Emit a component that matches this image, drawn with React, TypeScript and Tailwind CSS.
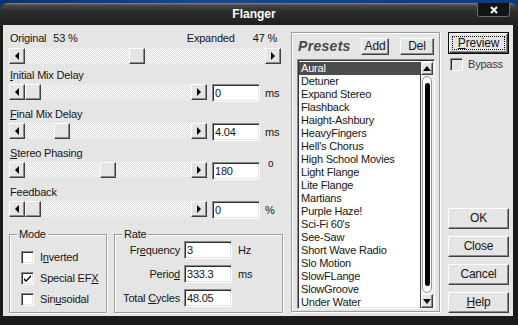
import type { ReactNode } from 'react'

// classic 3D edges
const raised =
  'border border-t-white border-l-white border-r-[#404040] border-b-[#404040] shadow-[inset_-1px_-1px_0_#8a8a8a] bg-[#e5e5e5]'
const sunken =
  'border border-t-[#8a8a8a] border-l-[#8a8a8a] border-r-white border-b-white shadow-[inset_1px_1px_0_#303030,inset_-1px_-1px_0_#e5e5e5]'
const etched = 'border border-[#9c9c9c] shadow-[1px_1px_0_#ffffff,inset_1px_1px_0_#ffffff]'

const presets = [
  'Aural',
  'Detuner',
  'Expand Stereo',
  'Flashback',
  'Haight-Ashbury',
  'HeavyFingers',
  "Hell's Chorus",
  'High School Movies',
  'Light Flange',
  'Lite Flange',
  'Martians',
  'Purple Haze!',
  "Sci-Fi 60's",
  'See-Saw',
  'Short Wave Radio',
  'Slo Motion',
  'SlowFLange',
  'SlowGroove',
  'Under Water',
]

function U({ children }: { children: ReactNode }) {
  return <span className="underline underline-offset-[1px]">{children}</span>
}

function ArrowButton({ dir }: { dir: 'left' | 'right' }) {
  return (
    <div className={`${raised} flex h-[16px] w-[16px] shrink-0 items-center justify-center`}>
      {dir === 'left' ? (
        <div className="h-0 w-0 border-y-[4px] border-r-[4px] border-y-transparent border-r-black" />
      ) : (
        <div className="h-0 w-0 border-y-[4px] border-l-[4px] border-y-transparent border-l-black" />
      )}
    </div>
  )
}

function Slider({ className, pos }: { className: string; pos: number }) {
  return (
    <div className={`flex h-[16px] shrink-0 ${className}`}>
      <ArrowButton dir="left" />
      <div className="flex flex-1 bg-[repeating-conic-gradient(#ffffff_0_25%,#dadada_0_50%)] [background-size:2px_2px]">
        <div className={`${raised} h-[16px] w-[16px]`} style={{ marginLeft: pos }} />
      </div>
      <ArrowButton dir="right" />
    </div>
  )
}

function Field({ value, className = '' }: { value: string; className?: string }) {
  return (
    <div className={`${sunken} flex h-[18px] w-[48px] shrink-0 items-center bg-white pl-[2px] ${className}`}>
      {value}
    </div>
  )
}

function SliderRow({
  label,
  pos,
  value,
  unit,
  first,
}: {
  label: ReactNode
  pos: number
  value: string
  unit: ReactNode
  first?: boolean
}) {
  return (
    <>
      <div className={`${first ? 'mt-[5px]' : 'mt-[6px]'} ml-[1px] h-[13px]`}>{label}</div>
      <div className="mt-[2px] flex h-[18px]">
        <Slider className="w-[198px]" pos={pos} />
        <Field className="ml-[5px]" value={value} />
        {unit}
      </div>
    </>
  )
}

function CheckBox({ checked, disabled }: { checked?: boolean; disabled?: boolean }) {
  return (
    <div
      className={`${sunken} flex h-[13px] w-[13px] shrink-0 items-center justify-center ${
        disabled ? 'bg-[#e5e5e5]' : 'bg-white'
      }`}
    >
      {checked && (
        <svg width="7" height="7" viewBox="0 0 7 7">
          <path d="M0 3 L0 5 L2 7 L7 2 L7 0 L2 5 Z" fill="#000" />
        </svg>
      )}
    </div>
  )
}

function Button({ children, className = 'h-[21px] w-[61px]' }: { children: ReactNode; className?: string }) {
  return (
    <div className={`${raised} flex shrink-0 items-center justify-center text-[12px] ${className}`}>
      {children}
    </div>
  )
}

function Scrollbar() {
  return (
    <div className="flex w-[13px] shrink-0 flex-col border-l border-[#404040] bg-[#f4f4f4]">
      <div className={`${raised} flex h-[13px] items-center justify-center`}>
        <div className="h-0 w-0 border-x-[4px] border-b-[5px] border-x-transparent border-b-black" />
      </div>
      <div className="mx-[1px] mt-[1px] flex flex-1 flex-col items-center rounded-full border border-[#9a9a9a] bg-[#fafafa] py-[6px]">
        <div className="w-[5px] flex-1 rounded-full bg-black" />
      </div>
      <div className={`${raised} mt-[1px] flex h-[14px] items-center justify-center`}>
        <div className="h-0 w-0 border-x-[4px] border-t-[5px] border-x-transparent border-t-black" />
      </div>
    </div>
  )
}

export default function App() {
  return (
    <div className="h-[325px] w-[518px] overflow-hidden bg-[linear-gradient(90deg,#0b336f,#14489a_40%,#0d3a7c)] font-['Liberation_Sans',Arial,sans-serif] text-[11px] leading-[13px] tracking-[-0.2px] text-[#151515]">
      <div className="mt-[3px] flex h-[322px] flex-col rounded-t-[8px] bg-[#1b1b1b]">
        {/* title bar */}
        <div className="relative flex h-[22px] shrink-0 items-center justify-center rounded-t-[8px] bg-[linear-gradient(#8a8a8a_0,#4a4a4a_2px,#2e2e2e_8px,#1e1e1e_100%)] pr-[10px]">
          <span className="text-[12px] font-bold tracking-normal text-white">Flanger</span>
          <div className="absolute right-[8px] top-0 flex h-[14px] w-[33px] items-center justify-center rounded-b-[3px] border border-t-0 border-[#6a6a6a] bg-[#141414]">
            <svg width="8" height="8" viewBox="0 0 8 8">
              <path d="M1 1 L7 7 M7 1 L1 7" stroke="#fff" strokeWidth="2" />
            </svg>
          </div>
        </div>

        {/* client area */}
        <div className="ml-[3px] mr-[5px] flex h-[291px] bg-[#e5e5e5]">
          {/* left column */}
          <div className="ml-[6px] flex w-[274px] flex-col">
            <div className="mt-[7px] flex h-[13px]">
              <span className="ml-[1px]">Original</span>
              <span className="ml-[7px]">53 %</span>
              <span className="ml-auto">Expanded</span>
              <span className="ml-[18px] mr-[6px]">47 %</span>
            </div>
            <Slider className="mt-[3px] w-[272px]" pos={104} />

            <SliderRow
              first
              label={
                <>
                  <U>I</U>nitial Mix Delay
                </>
              }
              pos={0}
              value="0"
              unit={<span className="ml-[5px] self-center">ms</span>}
            />
            <SliderRow
              label={
                <>
                  <U>F</U>inal Mix Delay
                </>
              }
              pos={29}
              value="4.04"
              unit={<span className="ml-[5px] self-center">ms</span>}
            />
            <SliderRow
              label={
                <>
                  <U>S</U>tereo Phasing
                </>
              }
              pos={75}
              value="180"
              unit={<span className="-mt-[3px] ml-[8px] text-[10px] leading-[10px]">o</span>}
            />
            <SliderRow label="Feedback" pos={0} value="0" unit={<span className="ml-[5px] self-center">%</span>} />

            {/* group boxes */}
            <div className="mt-[15px] flex">
              <div className={`${etched} relative h-[79px] w-[98px] pl-[11px] pt-[16px]`}>
                <span className="absolute -top-[7px] left-[7px] bg-[#e5e5e5] px-[2px]">Mode</span>
                <div className="flex flex-col gap-[8px]">
                  <div className="flex items-center">
                    <CheckBox />
                    <span className="ml-[6px]">
                      I<U>n</U>verted
                    </span>
                  </div>
                  <div className="flex items-center">
                    <CheckBox checked />
                    <span className="ml-[6px]">
                      Special EF<U>X</U>
                    </span>
                  </div>
                  <div className="flex items-center">
                    <CheckBox />
                    <span className="ml-[6px]">
                      Sin<U>u</U>soidal
                    </span>
                  </div>
                </div>
              </div>

              <div className={`${etched} relative ml-[7px] h-[79px] w-[169px] pt-[6px]`}>
                <span className="absolute -top-[7px] left-[7px] bg-[#e5e5e5] px-[2px]">Rate</span>
                <div className="flex flex-col gap-[6px]">
                  <div className="flex items-center">
                    <span className="w-[65px] text-right">
                      Fr<U>e</U>quency
                    </span>
                    <Field className="ml-[4px]" value="3" />
                    <span className="ml-[6px]">Hz</span>
                  </div>
                  <div className="flex items-center">
                    <span className="w-[65px] text-right">
                      Perio<U>d</U>
                    </span>
                    <Field className="ml-[4px]" value="333.3" />
                    <span className="ml-[6px]">ms</span>
                  </div>
                  <div className="flex items-center">
                    <span className="w-[65px] text-right">
                      Total <U>C</U>ycles
                    </span>
                    <Field className="ml-[4px]" value="48.05" />
                  </div>
                </div>
              </div>
            </div>
          </div>

          {/* presets */}
          <div className={`${etched} ml-[8px] mt-[7px] flex h-[280px] w-[149px] flex-col`}>
            <div className="mt-[5px] flex h-[17px] items-center">
              <span className="ml-[6px] text-[14px] font-bold italic tracking-[0.3px] text-[#4a4a4a]">Presets</span>
              <Button className="ml-auto h-[17px] w-[28px]">Add</Button>
              <Button className="ml-[11px] mr-[5px] h-[17px] w-[34px]">Del</Button>
            </div>
            <div className={`${sunken} ml-[5px] mt-[4px] flex h-[250px] w-[138px] bg-white px-[1px] pt-[2px]`}>
              <div className="flex-1 overflow-hidden">
                {presets.map((p, i) => (
                  <div key={p} className={`h-[13px] pl-[2px] ${i === 0 ? 'bg-[#4d4d4d] text-white' : ''}`}>
                    {p}
                  </div>
                ))}
              </div>
              <Scrollbar />
            </div>
          </div>

          {/* right column */}
          <div className="ml-[8px] flex w-[61px] flex-col">
            <div className="mt-[7px] h-[22px] border border-black">
              <div className={`${raised} flex h-full items-center justify-center p-[2px]`}>
                <div className="flex h-full w-full items-center justify-center border border-dotted border-black text-[12px]">
                  <U>P</U>review
                </div>
              </div>
            </div>
            <div className="ml-[2px] mt-[4px] flex items-center">
              <CheckBox disabled />
              <span className="ml-[5px] text-[#3a3a3a]">Bypass</span>
            </div>
            <div className="mb-[3px] mt-auto flex flex-col gap-[7px]">
              <Button>OK</Button>
              <Button>Close</Button>
              <Button>Cancel</Button>
              <Button>
                <span>
                  <U>H</U>elp
                </span>
              </Button>
            </div>
          </div>
        </div>
      </div>
    </div>
  )
}
